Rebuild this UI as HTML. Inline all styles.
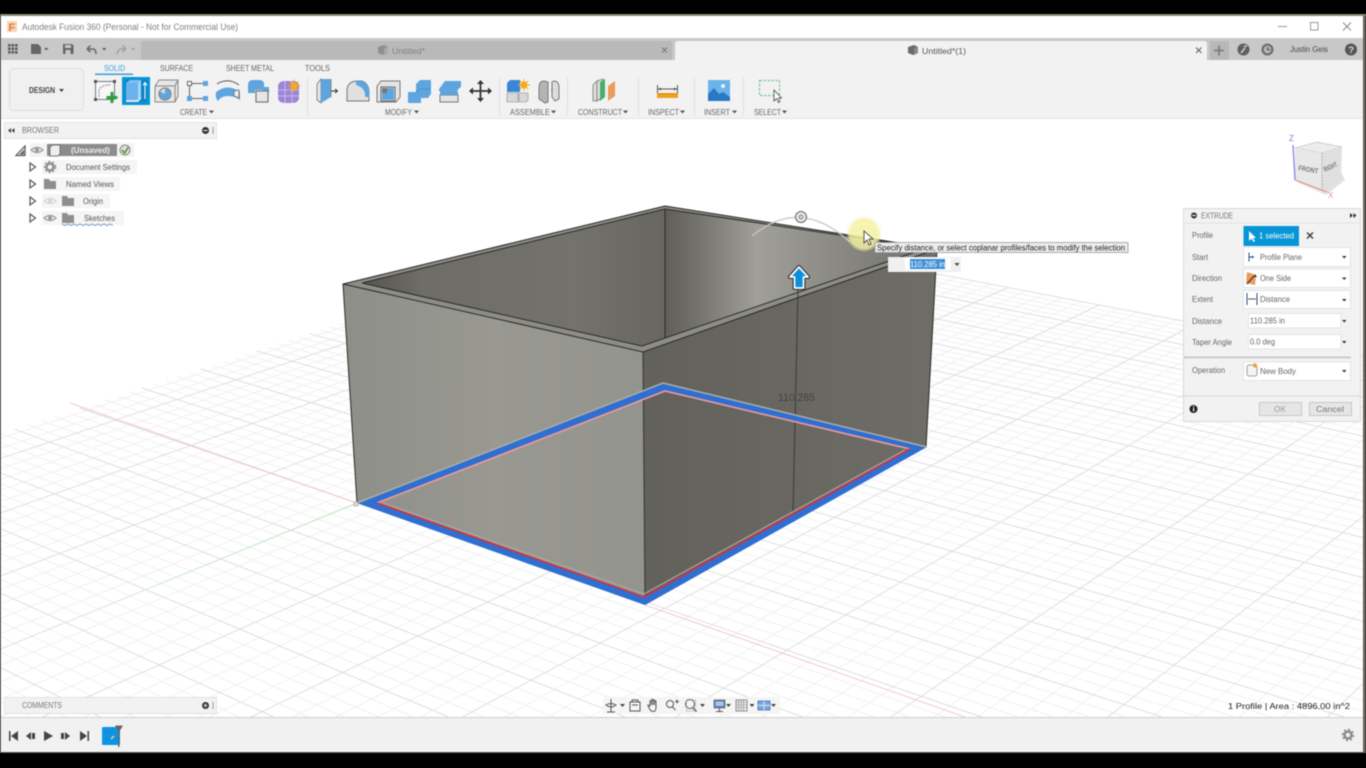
<!DOCTYPE html>
<html><head><meta charset="utf-8"><title>Autodesk Fusion 360</title>
<style>
html,body{margin:0;padding:0;background:#000;width:1366px;height:768px;overflow:hidden}
svg{display:block;overflow:hidden;filter:blur(.5px)}
text{font-family:"Liberation Sans",sans-serif;font-size:8px;fill:#666}
</style></head><body>
<svg xmlns="http://www.w3.org/2000/svg" width="1366" height="768" viewBox="0 0 1366 768">
<defs>
<linearGradient id="lf" x1="343" x2="645" y1="0" y2="0" gradientUnits="userSpaceOnUse"><stop offset="0" stop-color="#8f8f89"/><stop offset=".5" stop-color="#999992"/><stop offset="1" stop-color="#94948e"/></linearGradient>
<linearGradient id="rf" x1="645" x2="937" y1="300" y2="300" gradientUnits="userSpaceOnUse"><stop offset="0" stop-color="#62615c"/><stop offset="1" stop-color="#6e6d68"/></linearGradient>
<linearGradient id="iw" x1="362" x2="665" y1="0" y2="0" gradientUnits="userSpaceOnUse"><stop offset="0" stop-color="#55544f"/><stop offset=".2" stop-color="#6e6d68"/><stop offset=".7" stop-color="#73726d"/><stop offset="1" stop-color="#676661"/></linearGradient>
<linearGradient id="iw2" x1="665" x2="927" y1="0" y2="0" gradientUnits="userSpaceOnUse"><stop offset="0" stop-color="#5f5e59"/><stop offset=".12" stop-color="#73726c"/><stop offset=".35" stop-color="#a09f99"/><stop offset=".6" stop-color="#8e8d87"/><stop offset="1" stop-color="#72716c"/></linearGradient>
<radialGradient id="yel"><stop offset="0" stop-color="#f4f2a0"/><stop offset=".8" stop-color="#f4f2a0" stop-opacity=".9"/><stop offset="1" stop-color="#f4f2a0" stop-opacity="0"/></radialGradient>
<linearGradient id="gfade" x1="357" y1="503" x2="60" y2="625" gradientUnits="userSpaceOnUse"><stop offset="0" stop-color="#bde8bd"/><stop offset="1" stop-color="#dff3df"/></linearGradient>
<g id="eye"><path d="M-6 0Q0-5 6 0Q0 5-6 0Z" fill="none" stroke="#999" stroke-width="1.2"/><circle r="2" fill="#999"/></g>
<path id="folder" d="M0 1h5l1 2h6v8H0z" fill="#8e8e8e"/>
</defs>

<rect width="1366" height="768" fill="#000"/>
<!-- viewport -->
<rect x="0" y="118" width="1366" height="600" fill="#fff"/>
<path id="minor" fill="none" stroke="#f1f1f1" stroke-width="1"/>
<path id="major" fill="none" stroke="#dfdfdf" stroke-width="1"/>
<path d="M70 403L357 503" stroke="#f5c8c8" fill="none"/>
<path d="M645 605L965 717" stroke="#f5c8c8" fill="none"/>
<path d="M357 503L60 625" stroke="url(#gfade)" fill="none"/>

<!-- box -->
<polygon points="343,284 665,206 937,249 643,352" fill="#8d8d86"/>
<polygon points="362,283 665,209 665,338 642,346" fill="url(#iw)"/>
<polygon points="665,209 927,248 642,346 665,338" fill="url(#iw2)"/>
<polygon points="343,284 643,352 645,605 357,503" fill="url(#lf)"/>
<polygon points="643,352 937,249 926,447 645,605" fill="url(#rf)"/>
<g fill="none" stroke="#2a2a28" stroke-width="1">
<path d="M357 503L343 284L665 206L937 249L926 447"/>
<path d="M343 284L643 352L937 249"/>
<path d="M643 352L645 600" stroke="#333"/>
<path d="M362 283L665 209L927 248L642 346Z"/>
<path d="M665 209V338"/>
<path d="M798 290L793 512" stroke="#3a3a38"/>
</g>
<!-- selection profile -->
<path fill-rule="evenodd" d="M357 503L663 383L927 447L645 605ZM377 503L665 391L910 449L644 597Z" fill="#2f6fd2"/>
<path d="M357 503L663 383L927 447" fill="none" stroke="#aeaea6" stroke-width="1.5"/>
<path d="M377 503L665 391L910 449" fill="none" stroke="#f29a9a" stroke-width="1.6"/>
<path d="M377 503L644 597L910 449" fill="none" stroke="#d5303a" stroke-width="1.6"/>
<path d="M383 503L644 594L905 450" fill="none" stroke="#a8a89f" stroke-width="1.2"/>
<rect x="354" y="502" width="4" height="4" fill="#ddd" stroke="#999" stroke-width=".6"/>
<text x="778" y="401" textLength="37" lengthAdjust="spacingAndGlyphs" style="font-size:11px;fill:#44443f">110.285</text>

<!-- manipulators -->
<path d="M752 236Q800 196 850 242" fill="none" stroke="#c8c8c4" stroke-width="1.6" opacity=".85"/>
<circle cx="801" cy="217" r="5.500" fill="#e6e6e4" stroke="#666" stroke-width="1"/><circle cx="801" cy="217" r="1.800" fill="none" stroke="#666" stroke-width=".8"/>
<path d="M799 267L790 277H794.500V288H803.500V277H808Z" fill="none" stroke="#333" stroke-width="4" stroke-linejoin="round"/>
<path d="M799 267L790 277H794.500V288H803.500V277H808Z" fill="#0a8fdc" stroke="#fff" stroke-width="1.700" stroke-linejoin="round"/>
<circle cx="864" cy="234" r="18" fill="url(#yel)" opacity=".9"/>
<path d="M864 231V243L867 240L869 245L871 244L869 239L873 239Z" fill="#fff" stroke="#333" stroke-width=".8"/>
<rect x="875" y="242.500" width="253" height="10" fill="#ececec" stroke="#999" stroke-width=".8"/>
<text x="877" y="250.500" textLength="248" lengthAdjust="spacingAndGlyphs" style="fill:#222">Specify distance, or select coplanar profiles/faces to modify the selection</text>
<rect x="888" y="257" width="73" height="15" fill="#f0f0f0"/>
<rect x="905" y="258" width="46" height="12" fill="#fff"/>
<rect x="910" y="259" width="35" height="10" fill="#3e8ed6"/>
<text x="910" y="267" textLength="35" lengthAdjust="spacingAndGlyphs" style="fill:#fff">110.285 in</text>
<path d="M954.500 263h5l-2.500 3z" fill="#444"/>

<!-- window chrome -->
<rect x="0" y="14" width="1366" height="2" fill="#8d8878"/>
<rect x="0" y="16" width="1366" height="22" fill="#fff"/>
<rect x="7" y="21" width="10" height="11" fill="#f5d7bd"/>
<text x="8.500" y="31" style="font-size:11px;font-weight:bold;fill:#e8772e">F</text>
<text x="22" y="30" textLength="216" lengthAdjust="spacingAndGlyphs" style="font-size:9px;fill:#808080">Autodesk Fusion 360 (Personal - Not for Commercial Use)</text>
<path d="M1278 26.500h9" stroke="#999" fill="none"/>
<rect x="1310.500" y="22.500" width="7.500" height="7.500" fill="none" stroke="#999"/>
<path d="M1343 22.500l8 8M1351 22.500l-8 8" stroke="#888" fill="none"/>

<rect x="0" y="38" width="1366" height="22" fill="#c8c8c8"/>
<rect x="141" y="41" width="531" height="19" fill="#b9b9b9"/>
<path d="M675 60V44Q675 41 678 41H1204Q1207 41 1207 44V60Z" fill="#f2f2f2"/>
<rect x="1210" y="41" width="19" height="19" fill="#b8b8b8"/>
<path d="M1214 50.500h10M1219 45.500v10" stroke="#777" stroke-width="1.600" fill="none"/>
<g fill="#5c5c5c">
<rect x="8" y="44" width="2.600" height="2.600"/><rect x="11.500" y="44" width="2.600" height="2.600"/><rect x="15" y="44" width="2.600" height="2.600"/>
<rect x="8" y="47.500" width="2.600" height="2.600"/><rect x="11.500" y="47.500" width="2.600" height="2.600"/><rect x="15" y="47.500" width="2.600" height="2.600"/>
<rect x="8" y="51" width="2.600" height="2.600"/><rect x="11.500" y="51" width="2.600" height="2.600"/><rect x="15" y="51" width="2.600" height="2.600"/>
<path d="M31 44h7l3 3v7H31z" fill="#666"/>
<path d="M44 48h4.500l-2.250 2.500z"/>
<path d="M63 44h9l1.500 1.500V54H63z" fill="#666"/>
<rect x="65" y="45" width="6" height="3" fill="#c8c8c8"/><rect x="65.500" y="50" width="5" height="4" fill="#c8c8c8"/>
<path d="M102 48h4.500l-2.250 2.500z"/>
</g>
<path d="M87 49l3.500-3.500M87 49l3.500 3M87 49h6q3 0 3 5" fill="none" stroke="#666" stroke-width="1.500"/>
<path d="M126 49l-3.500-3.500M126 49l-3.500 3M126 49h-5q-3 0-4 5" fill="none" stroke="#a0a0a0" stroke-width="1.500"/>
<path d="M131 48h4.500l-2.250 2.500z" fill="#a0a0a0"/>
<path d="M378 47l6-2 4 2v6l-5 2-5-2z" fill="#8e8e8e"/><path d="M384 48l4-1v6l-4 2z" fill="#a8a8a8"/>
<text x="392" y="54" textLength="33" lengthAdjust="spacingAndGlyphs" style="fill:#808080">Untitled*</text>
<path d="M662 47.500l5 5M667 47.500l-5 5" stroke="#7a7a7a" stroke-width="1.100" fill="none"/>
<path d="M908 47l6-2 4 2v6l-5 2-5-2z" fill="#6a6a6a"/><path d="M914 48l4-1v6l-4 2z" fill="#8a8a8a"/>
<text x="922" y="54" textLength="44" lengthAdjust="spacingAndGlyphs" style="fill:#555">Untitled*(1)</text>
<path d="M1196 47.500l5.500 5.500M1201.500 47.500l-5.500 5.500" stroke="#666" stroke-width="1.100" fill="none"/>
<circle cx="1243.500" cy="49.500" r="6" fill="#5e5e5e"/><path d="M1241 53l4-5" stroke="#ccc" stroke-width="1.600"/><path d="M1244 47a2 2 0 0 1 3-.500" stroke="#ccc" stroke-width="1.500" fill="none"/>
<circle cx="1267.500" cy="49.500" r="6" fill="#6e6e6e"/><circle cx="1267.500" cy="49.500" r="3.700" fill="#b9b9b9"/><path d="M1267.500 47v2.800h2.500" stroke="#444" fill="none"/>
<text x="1290" y="52" textLength="38" lengthAdjust="spacingAndGlyphs" style="fill:#4a4a4a">Justin Geis</text>
<circle cx="1351" cy="49.500" r="6" fill="#555"/><text x="1348.300" y="53" style="font-size:9.500px;font-weight:bold;fill:#ddd">?</text>

<!-- ribbon -->
<rect x="0" y="60" width="1366" height="58" fill="#f2f2f2"/>
<rect x="0" y="118" width="1366" height="1" fill="#e4e4e4"/>
<rect x="9.500" y="68.500" width="74" height="42" rx="4" fill="#f0f0f0" stroke="#dcdcdc"/>
<text x="29" y="93" textLength="26" lengthAdjust="spacingAndGlyphs" style="font-weight:bold;fill:#444">DESIGN</text>
<path d="M59 89h5l-2.500 3z" fill="#444"/>
<text x="104" y="71" textLength="21" lengthAdjust="spacingAndGlyphs" style="fill:#3a9ed8">SOLID</text>
<rect x="95" y="73.500" width="38" height="1.500" fill="#3a9ed8"/>
<text x="160" y="71" textLength="33" lengthAdjust="spacingAndGlyphs">SURFACE</text>
<text x="226" y="71" textLength="48" lengthAdjust="spacingAndGlyphs">SHEET METAL</text>
<text x="305" y="71" textLength="25" lengthAdjust="spacingAndGlyphs">TOOLS</text>

<!-- sketch -->
<rect x="95.500" y="81.500" width="19" height="18" fill="#f7f7f7" stroke="#777"/>
<path d="M99 97V90Q101 85 110 85" fill="none" stroke="#888" stroke-dasharray="2 1"/>
<g fill="#555"><rect x="94" y="80" width="3" height="3"/><rect x="113" y="80" width="3" height="3"/><rect x="94" y="98" width="3" height="3"/></g>
<path d="M112 92v11M106.500 97.500h11" stroke="#2f9e44" stroke-width="3" fill="none"/>
<!-- extrude -->
<rect x="122" y="77" width="28" height="28" fill="#0696d7"/>
<rect x="125" y="80" width="22" height="22" fill="#0a85c8"/>
<path d="M126 83l4-3h11v16l-3 4h-12z" fill="#7fbcef"/><path d="M126 83h12v17h-12z" fill="#6cb2ee"/><path d="M138 83l3-3v16l-3 4z" fill="#a8d4f4"/>
<path d="M126 100h12l3-4v3l-3 3h-12z" fill="#dfe6ea"/>
<path d="M145 99V83M143 85.500l2-3 2 3" stroke="#fff" fill="none"/>
<!-- revolve -->
<path d="M155 86l4-6h19v16l-3 6h-20z" fill="#e6e6e6" stroke="#888"/>
<path d="M155 86h20v16M175 86l3-6" fill="none" stroke="#888"/>
<circle cx="165" cy="94" r="6" fill="#d8d8d8" stroke="#777"/><path d="M165 94v-5.500a5.500 5.500 0 1 1-5 3z" fill="#5ea5e0"/>
<!-- box/rectangle pts -->
<g fill="#5ea5e0"><rect x="203" y="81" width="5" height="5"/><rect x="187" y="96" width="5" height="5"/><rect x="203" y="96" width="5" height="5"/></g>
<rect x="187.500" y="81.500" width="4" height="4" fill="#fff" stroke="#666"/>
<path d="M192 83.500h11M189.500 86v10M192 98.500h11" stroke="#666" fill="none"/>
<!-- sweep -->
<path d="M216 92Q228 83 240 92V100Q235 96 228 96Q221 96 218 101Q215 98 216 92Z" fill="#5ea5e0"/>
<path d="M217 84Q228 77 239 85" fill="none" stroke="#555"/><path d="M234 91l5-1v8l-5-2z" fill="#eee" stroke="#777"/>
<!-- loft -->
<path d="M248 85q0-5 5-5h6q5 0 5 4v3h5v6h-6v-3h-8v3h-7z" fill="#5ea5e0"/>
<rect x="256" y="91" width="12" height="11" fill="#e6e6e6" stroke="#777" stroke-width="1.200"/>
<!-- purple -->
<path d="M278 87q0-6 7-6h8q6 0 6 6v10q0 6-7 6h-7q-7 0-7-6z" fill="#9c84d8"/>
<path d="M278 90h21M278 96h21M285 81v22M292 81v22" stroke="#c8b8ea" fill="none"/>
<circle cx="294" cy="86" r="3.500" fill="#f8a818"/><path d="M294 79.500v13M287.500 86h13M289.500 81.500l9 9M298.500 81.500l-9 9" stroke="#f8a818" fill="none"/>
<text x="180" y="115" textLength="27" lengthAdjust="spacingAndGlyphs">CREATE</text><path d="M209 110.500h5l-2.500 3z" fill="#555"/>
<rect x="307" y="78" width="1" height="38" fill="#e0e0e0"/>

<!-- modify -->
<path d="M317 84l4-5v24l-4-3z" fill="#e4e4e4" stroke="#777" stroke-width=".8"/><path d="M321 79h10v18l-10 6z" fill="#5ea5e0"/><path d="M331 79v18" stroke="#777" stroke-width=".8"/>
<path d="M331 91h6M335 89l2.500 2-2.500 2" stroke="#333" fill="none"/>
<path d="M347 101V91Q347 81 358 81H362Q370 84 369 96V101Z" fill="#e0e0e0" stroke="#777"/><path d="M356 81H362Q370 84 369.500 97H365Q366 88 356 85Z" fill="#5ea5e0"/>
<path d="M377 86l4-5h19v16l-4 5h-19z" fill="#e4e4e4" stroke="#777"/>
<path d="M381 87h14v14h-14z" fill="#f4f4f4" stroke="#666"/><path d="M382 93h5v-5h7v12h-12z" fill="#5ea5e0"/><rect x="382" y="88" width="5" height="5" fill="#333" opacity=".65"/>
<path d="M408 92h8v-8l4-4h11v14l-3 4h-7v5h-13z" fill="#5ea5e0"/><path d="M416 92l4-3h10" stroke="#4a90d0" fill="none"/>
<path d="M439 89l6-8h16v6l-5 5h-17z" fill="#5ea5e0"/><path d="M438 92h19l5-5" stroke="#fff" stroke-width="1.500" fill="none"/>
<path d="M440 95h18v7h-18z" fill="#e4e4e4" stroke="#777"/><path d="M440 91h18v4h-18z" fill="#5ea5e0"/>
<path d="M480.500 82v18M471 91h19" stroke="#333" stroke-width="1.800" fill="none"/>
<path d="M480.500 80l-3.500 4h7zM480.500 102l-3.500-4h7zM469 91l4-3.500v7zM492 91l-4-3.500v7z" fill="#333"/>
<text x="385" y="115" textLength="27" lengthAdjust="spacingAndGlyphs">MODIFY</text><path d="M414 110.500h5l-2.500 3z" fill="#555"/>
<rect x="499" y="78" width="1" height="38" fill="#e0e0e0"/>

<!-- assemble -->
<path d="M507 92v-9l3-3h10v12z" fill="#3a86d6"/><path d="M507 93h11v9h-11zM519 93h9v7l-2 2h-7z" fill="#d8d8d8" stroke="#888" stroke-width=".6"/>
<circle cx="524" cy="85" r="3.500" fill="#f8a818"/><path d="M524 79v12M518 85h12M520 81l8 8M528 81l-8 8" stroke="#f8a818" fill="none"/>
<path d="M539 88q0-7 5-7l4 1v20l-3 1-6-4z" fill="#b4b4b4" stroke="#777"/><path d="M559 88q0-7-5-7l-2 1v15l3 4 4-2z" fill="#dcdcdc" stroke="#777"/><circle cx="552" cy="90" r="1.200" fill="#5ea5e0"/>
<text x="510" y="115" textLength="40" lengthAdjust="spacingAndGlyphs">ASSEMBLE</text><path d="M551 110.500h5l-2.500 3z" fill="#555"/>
<rect x="567" y="78" width="1" height="38" fill="#e0e0e0"/>

<!-- construct -->
<path d="M593 85l4-4v20h-4z" fill="#ddd" stroke="#777" stroke-width=".8"/><path d="M597 81l6-2v18l-6 4z" fill="#dfdfdf" stroke="#777" stroke-width=".8"/>
<path d="M600 82l5-3v18l-5 4z" fill="#45b069"/><path d="M608 86l7-5v15l-7 5z" fill="#ee9a5c"/>
<text x="578" y="115" textLength="44" lengthAdjust="spacingAndGlyphs">CONSTRUCT</text><path d="M623 110.500h5l-2.500 3z" fill="#555"/>
<rect x="638" y="78" width="1" height="38" fill="#e0e0e0"/>
<!-- inspect -->
<path d="M657.500 85v8M677.500 85v8M658 89h19" stroke="#555" fill="none"/><path d="M658 89l3-1.500v3zM677 89l-3-1.500v3z" fill="#555"/>
<rect x="657" y="93" width="21" height="5" fill="#f0a020"/><path d="M658 94h19" stroke="#c47a10" stroke-dasharray="1 1" fill="none"/>
<text x="648" y="115" textLength="31" lengthAdjust="spacingAndGlyphs">INSPECT</text><path d="M680 110.500h5l-2.500 3z" fill="#555"/>
<rect x="694" y="78" width="1" height="38" fill="#e0e0e0"/>
<!-- insert -->
<rect x="708" y="80" width="22" height="21" fill="#6ab4ec"/><circle cx="723" cy="86" r="2" fill="#e8f2fa"/>
<path d="M708 101V94L714 88L719 94L723 92L730 97V101Z" fill="#2a78c4"/>
<text x="704" y="115" textLength="26" lengthAdjust="spacingAndGlyphs">INSERT</text><path d="M732 110.500h5l-2.500 3z" fill="#555"/>
<rect x="743" y="78" width="1" height="38" fill="#e0e0e0"/>
<!-- select -->
<rect x="759.500" y="80.500" width="20" height="15" fill="none" stroke="#7cc49a" stroke-width="1.200" stroke-dasharray="2.500 1.500"/>
<path d="M774 90V101L776.500 98.500L778.500 102.500L780 101.500L778.500 98H781.500Z" fill="#fff" stroke="#444" stroke-width=".8"/>
<text x="754" y="115" textLength="27" lengthAdjust="spacingAndGlyphs">SELECT</text><path d="M782 110.500h5l-2.500 3z" fill="#555"/>

<!-- browser -->
<rect x="4.500" y="122.500" width="212" height="16" fill="#f2f2f2" stroke="#e2e2e2"/>
<path d="M8 130.500l3-2.500v5zM11.500 130.500l3-2.500v5z" fill="#444"/>
<text x="22" y="133" textLength="37" lengthAdjust="spacingAndGlyphs" style="fill:#777">BROWSER</text>
<circle cx="205.500" cy="130.500" r="3.500" fill="#333"/><rect x="203.500" y="130" width="4" height="1" fill="#fff"/>
<rect x="212.500" y="127" width="1" height="7" fill="#999"/>
<rect x="30" y="143" width="104" height="14" fill="#f3f3f3"/>
<path d="M16 155.500L25 146V155.500Z" fill="none" stroke="#555" stroke-width="1.200"/><path d="M19 154.500l5-5v5z" fill="#666"/>
<use href="#eye" x="37" y="150"/>
<rect x="47" y="144" width="70" height="12" fill="#8c8c8c"/>
<path d="M50 147l3-2h7v9l-2 2h-8z" fill="#eee" stroke="#555" stroke-width=".7"/>
<text x="71" y="153" textLength="39" lengthAdjust="spacingAndGlyphs" style="font-weight:bold;fill:#eee">(Unsaved)</text>
<circle cx="125" cy="150" r="5" fill="#ddd" stroke="#888"/><path d="M122 150l2.500 3 4-6" fill="none" stroke="#5a8f2e" stroke-width="1.500"/>

<rect x="42" y="160" width="95" height="14" fill="#f5f5f5"/>
<rect x="42" y="177" width="78" height="14" fill="#f5f5f5"/>
<rect x="42" y="194" width="68" height="14" fill="#f5f5f5"/>
<rect x="42" y="211" width="82" height="14" fill="#f5f5f5"/>
<g fill="#fff" stroke="#555" stroke-width="1.200">
<path d="M30 163l5.500 4-5.500 4z"/><path d="M30 180l5.500 4-5.500 4z"/><path d="M30 197l5.500 4-5.500 4z"/><path d="M30 214l5.500 4-5.500 4z"/>
</g>
<circle cx="50" cy="167" r="3.500" fill="none" stroke="#8e8e8e" stroke-width="2.500"/>
<circle cx="50" cy="167" r="5.500" fill="none" stroke="#8e8e8e" stroke-width="1.400" stroke-dasharray="2 2"/>
<text x="66" y="170" textLength="64" lengthAdjust="spacingAndGlyphs" style="fill:#555">Document Settings</text>
<use href="#folder" x="44" y="178"/>
<text x="66" y="187" textLength="48" lengthAdjust="spacingAndGlyphs" style="fill:#555">Named Views</text>
<g opacity=".35"><use href="#eye" x="50" y="201"/></g>
<use href="#folder" x="62" y="195"/>
<text x="83" y="204" textLength="20" lengthAdjust="spacingAndGlyphs" style="fill:#555">Origin</text>
<use href="#eye" x="50" y="218"/>
<use href="#folder" x="62" y="212"/>
<text x="84" y="221" textLength="31" lengthAdjust="spacingAndGlyphs" style="fill:#555">Sketches</text>
<path d="M62 224l3 1.500 3-1.500 3 1.500 3-1.500 3 1.500 3-1.500 3 1.500 3-1.500 3 1.500 3-1.500 3 1.500 3-1.500 3 1.500 3-1.500 3 1.500 3-1.500 3 1.500" fill="none" stroke="#6f86c8" stroke-width=".9"/>

<!-- comments -->
<rect x="4.500" y="697.500" width="212" height="16" fill="#f2f2f2" stroke="#e2e2e2"/>
<text x="22" y="708" textLength="40" lengthAdjust="spacingAndGlyphs" style="fill:#777">COMMENTS</text>
<circle cx="205.500" cy="705.500" r="3.500" fill="#333"/><path d="M203.500 705.500h4M205.500 703.500v4" stroke="#fff" stroke-width=".8"/>
<rect x="212.500" y="702" width="1" height="7" fill="#999"/>

<!-- nav bar -->
<rect x="603" y="697" width="177" height="17" fill="#f4f4f4" opacity=".9"/>
<g fill="none" stroke="#555" stroke-width="1">
<path d="M611 699v13M607 712h8M606 705q5 4 10 0q-5-3-10 0z"/>
<path d="M630 702h10v9h-10zM632 702v-2h6v2M632 705h6"/>
<path d="M651 711q-3-4-3-6l2 1v-5l1.500 0v4v-5.500h1.500v5.500v-5h1.500v5v-4h1.500v6q0 4-2 4.500z"/>
<circle cx="670" cy="704" r="3.500"/><path d="M672.500 707l3 3M675 701.500h4M677 699.500v4"/>
<circle cx="690" cy="704" r="4.500"/><path d="M693 708l3.500 3.500" stroke-width="1.500"/>
<rect x="686.500" y="700" width="9" height="11" stroke-dasharray="1 1" stroke="#999"/>
</g>
<path d="M620 704h5l-2.500 3zM700 704h5l-2.500 3zM726 704h5l-2.500 3zM749.500 704h5l-2.500 3zM771 704h5l-2.500 3z" fill="#444"/>
<rect x="714" y="700" width="11" height="8" fill="#5b7fb4" stroke="#555" stroke-width=".6"/><rect x="715.500" y="701.500" width="8" height="4.500" fill="#a9c4e4"/><path d="M719.500 708v3M716 711.500h7" stroke="#555" fill="none"/>
<rect x="736" y="700" width="11" height="11" fill="#eee" stroke="#777" stroke-width=".8"/>
<path d="M738.500 700v11M741 700v11M743.500 700v11M736 702.500h11M736 705h11M736 707.500h11" stroke="#888" stroke-width=".6" fill="none"/>
<rect x="758" y="701" width="12" height="9" fill="#7ba6dc" stroke="#3c6cb4" stroke-width=".8"/><path d="M764 701v9M758 705.500h12" stroke="#dce8f6" fill="none"/>
<text x="1228" y="709" textLength="122" lengthAdjust="spacingAndGlyphs" style="fill:#222;font-size:8px">1 Profile | Area : 4896.00 in^2</text>

<!-- timeline -->
<rect x="0" y="717" width="1366" height="36" fill="#f1f1f1"/>
<rect x="0" y="717" width="1366" height="1" fill="#cfcfcf"/>
<rect x="0" y="752" width="1366" height="1" fill="#555"/>
<g fill="#444">
<path d="M9 731h1.500v10H9zM18 731v10l-7-5z"/>
<path d="M26 736l5-4v8zM32 733h3v6h-3z"/>
<path d="M44 731l9 5-9 5z"/>
<path d="M61 733h3v6h-3zM65 732l5 4-5 4z"/>
<path d="M80 731v10l7-5zM87.500 731H89v10h-1.500z"/>
</g>
<rect x="102" y="727" width="18" height="18" rx="1" fill="#0a96e8"/>
<rect x="106" y="731" width="8" height="8" fill="none" stroke="#3a78b0" stroke-width=".7"/>
<path d="M111 739l3-3" stroke="#e8d890" stroke-width="1.500"/>
<path d="M115 725.500h8l-3 5v2h-2v-2z" fill="#666"/><rect x="118" y="730" width="1.500" height="17" fill="#666"/>
<circle cx="1348" cy="735" r="3.500" fill="none" stroke="#8a8a8a" stroke-width="2.500"/>
<circle cx="1348" cy="735" r="5.500" fill="none" stroke="#8a8a8a" stroke-width="1.500" stroke-dasharray="2 2.300"/>

<!-- viewcube -->
<path d="M1297 182L1326 195L1345 180L1340 170Z" fill="#d4d4d4" opacity=".7"/>
<polygon points="1295,148 1317,142 1342,147 1322,153" fill="#ececec" stroke="#aaa" stroke-width=".7" stroke-dasharray="2 1"/>
<polygon points="1295,148 1322,153 1322,192 1295,180" fill="#e8e8e8"/>
<polygon points="1322,153 1342,147 1341,177 1322,192" fill="#e0e0e0"/>
<path d="M1322 153V192" stroke="#999" stroke-width=".7" stroke-dasharray="2 1" fill="none"/>
<text x="1298" y="170" textLength="20" lengthAdjust="spacingAndGlyphs" transform="rotate(10 1298 170)" style="fill:#777;font-size:7px;font-weight:bold">FRONT</text>
<text x="1325" y="172" textLength="14" lengthAdjust="spacingAndGlyphs" transform="rotate(-25 1325 172)" style="fill:#777;font-size:7px;font-weight:bold">RIGHT</text>
<path d="M1293 145L1295 180" stroke="#7a7ae8" stroke-width="1.200" fill="none"/>
<path d="M1295 180L1327 192" stroke="#e88a8a" stroke-width="1.200" fill="none"/>
<text x="1289" y="141" style="font-size:8px;fill:#7a7ae8">Z</text>
<text x="1328" y="198" style="font-size:8px;fill:#e88a8a">X</text>

<!-- extrude panel -->
<rect x="1183.500" y="208.500" width="177" height="213" fill="#f2f2f2" stroke="#dadada"/>
<path d="M1184 223h176" stroke="#e2e2e2"/>
<circle cx="1194" cy="215.500" r="3" fill="#333"/><rect x="1192" y="215" width="4" height="1" fill="#fff"/>
<text x="1201" y="218.500" textLength="32" lengthAdjust="spacingAndGlyphs" style="fill:#777">EXTRUDE</text>
<path d="M1350 213l3 2.500-3 2.500zM1353.500 213l3 2.500-3 2.500z" fill="#333"/>
<g style="fill:#555">
<text x="1192" y="238" textLength="21" lengthAdjust="spacingAndGlyphs">Profile</text>
<text x="1192" y="260" textLength="16" lengthAdjust="spacingAndGlyphs">Start</text>
<text x="1192" y="281" textLength="30" lengthAdjust="spacingAndGlyphs">Direction</text>
<text x="1192" y="302" textLength="21" lengthAdjust="spacingAndGlyphs">Extent</text>
<text x="1192" y="324" textLength="30" lengthAdjust="spacingAndGlyphs">Distance</text>
<text x="1192" y="345" textLength="40" lengthAdjust="spacingAndGlyphs">Taper Angle</text>
<text x="1192" y="373" textLength="33" lengthAdjust="spacingAndGlyphs">Operation</text>
</g>
<rect x="1243.500" y="226" width="55.500" height="20" fill="#0696d7"/>
<path d="M1249 231V241L1251.500 238.500L1253.500 242L1255 241L1253 238H1256Z" fill="#fff"/>
<text x="1259" y="238.500" textLength="35" lengthAdjust="spacingAndGlyphs" style="fill:#fff">1 selected</text>
<path d="M1307 232.500l6 6M1313 232.500l-6 6" stroke="#333" stroke-width="1.300" fill="none"/>
<g fill="#fff" stroke="#e4e4e4">
<rect x="1243.500" y="247.500" width="107" height="19"/>
<rect x="1243.500" y="269" width="107" height="18.500"/>
<rect x="1243.500" y="290.500" width="107" height="18"/>
<rect x="1248.500" y="313.500" width="92.500" height="14.500"/>
<rect x="1248.500" y="334.500" width="92.500" height="14.500"/>
<rect x="1243.500" y="362" width="107" height="18.500"/>
</g>
<path d="M1249 252.500v9M1249 257h5" stroke="#2a4a80" fill="none"/>
<path d="M1252 255.500l2 1.500-2 1.500z" fill="#2a4a80"/>
<path d="M1247 272l9 3-1 10-9-2z" fill="#ee9a5c"/><path d="M1247 284l7-8" stroke="#333" stroke-width="1.300"/><path d="M1255 274l2 3-3 0z" fill="#333"/>
<path d="M1247 293v12M1257 293v12" stroke="#2a4a80" fill="none"/><path d="M1248 299h8" stroke="#555" fill="none"/>
<rect x="1247" y="365" width="10" height="11" rx="2" fill="#f4f4f4" stroke="#888" stroke-width=".8"/><circle cx="1255" cy="365.500" r="2.200" fill="#f0a040"/>
<g style="fill:#555">
<text x="1260" y="260" textLength="42" lengthAdjust="spacingAndGlyphs">Profile Plane</text>
<text x="1260" y="281" textLength="31" lengthAdjust="spacingAndGlyphs">One Side</text>
<text x="1260" y="302" textLength="30" lengthAdjust="spacingAndGlyphs">Distance</text>
<text x="1250" y="323.500" textLength="35" lengthAdjust="spacingAndGlyphs">110.285 in</text>
<text x="1250" y="344.500" textLength="25" lengthAdjust="spacingAndGlyphs">0.0 deg</text>
<text x="1260" y="374" textLength="36" lengthAdjust="spacingAndGlyphs">New Body</text>
</g>
<path d="M1342 256h4.500l-2.250 2.500zM1342 277.500h4.500l-2.250 2.500zM1342 299h4.500l-2.250 2.500zM1342 320h4.500l-2.250 2.500zM1342 341h4.500l-2.250 2.500zM1342 370h4.500l-2.250 2.500z" fill="#333"/>
<rect x="1184" y="356.500" width="167" height="1.800" fill="#c8c8c8"/>
<rect x="1184" y="395.500" width="176" height="1" fill="#d8d8d8"/>
<circle cx="1193.500" cy="409" r="4" fill="#222"/><rect x="1193" y="408" width="1.200" height="3.500" fill="#fff"/><rect x="1193" y="406" width="1.200" height="1.200" fill="#fff"/>
<rect x="1259.500" y="402.500" width="42" height="13" fill="#e6e6e6" stroke="#c8c8c8"/>
<text x="1274" y="412" textLength="12" lengthAdjust="spacingAndGlyphs" style="fill:#999">OK</text>
<rect x="1309.500" y="402.500" width="42" height="13" fill="#e6e6e6" stroke="#c8c8c8"/>
<text x="1316" y="412" textLength="28" lengthAdjust="spacingAndGlyphs" style="fill:#777">Cancel</text>

<!-- side frame -->
<rect x="0" y="16" width="1" height="737" fill="#777"/>
<rect x="1363" y="16" width="3" height="737" fill="#66635a"/>
</svg>
<script>
(function(){
var O=[357,503],V1=[-1900,-270],V2=[2494,-373],a=.04,b=.03;
var L=0,R=1366,T=118,B=717;
function P(X,Y){var d=1+a*X+b*Y;return [(O[0]+a*X*V1[0]+b*Y*V2[0])/d,(O[1]+a*X*V1[1]+b*Y*V2[1])/d]}
function seg(p,q){
 var t0=0,t1=1,dx=q[0]-p[0],dy=q[1]-p[1],c=[[-dx,p[0]-L],[dx,R-p[0]],[-dy,p[1]-T],[dy,B-p[1]]],i,r;
 for(i=0;i<4;i++){
  if(c[i][0]==0){if(c[i][1]<0)return ''}
  else{r=c[i][1]/c[i][0];if(c[i][0]<0){if(r>t0)t0=r}else{if(r<t1)t1=r}}
 }
 if(t0>=t1)return '';
 return 'M'+(p[0]+t0*dx).toFixed(1)+' '+(p[1]+t0*dy).toFixed(1)+'L'+(p[0]+t1*dx).toFixed(1)+' '+(p[1]+t1*dy).toFixed(1);
}
var x0=-12,x1=3.5,y0=-12,y1=12,mi='',ma='',i,v,s;
for(i=x0*5;i<=x1*5;i++){v=i/5;s=seg(P(v,y0),P(v,y1));if(i%5==0)ma+=s;else mi+=s}
for(i=y0*5;i<=y1*5;i++){v=i/5;s=seg(P(x0,v),P(x1,v));if(i%5==0)ma+=s;else mi+=s}
document.getElementById('minor').setAttribute('d',mi);
document.getElementById('major').setAttribute('d',ma);
})();
</script>
</body></html>
